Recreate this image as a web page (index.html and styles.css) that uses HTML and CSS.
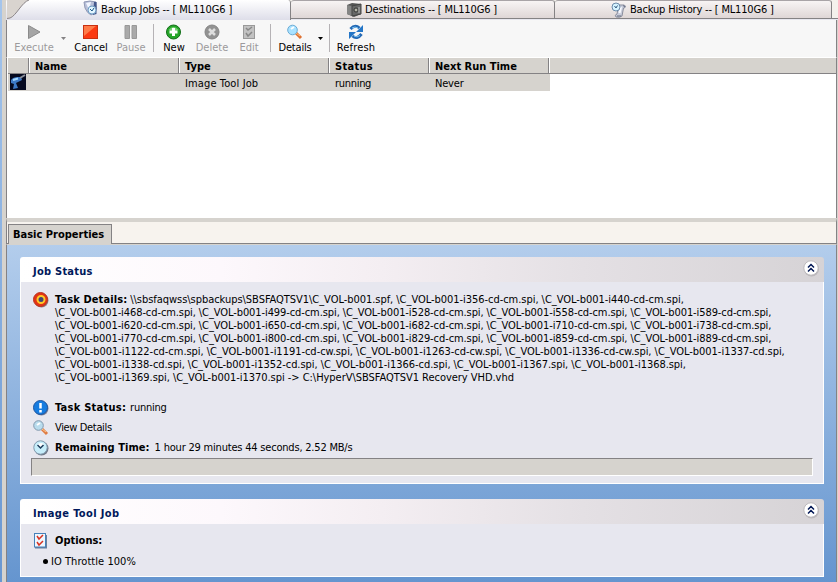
FILE: index.html
```
<!DOCTYPE html>
<html lang="en">
  <head>
    <meta charset="UTF-8" />
    <title>Backup Jobs</title>
    <link rel="stylesheet" href="styles.css">
  </head>
  <body>
    <div class="window">
      <!-- tabs -->
      <div class="tabs">
        <div class="tab active">
          <svg class="slant" width="22" height="19" viewBox="0 0 22 19">
            <path d="M0 0H22C15 2 9 16 3 18L0 18.5Z" fill="#d9d4cf" />
            <path d="M22 0C15 2 9 16 3 18L0 18.5" fill="none" stroke="#8b8588" />
          </svg>
          <svg class="icon tab-icon" width="16" height="16" viewBox="0 0 16 16">
            <path d="M1 2Q7 0 13 2L13.500 9Q12 14 8 15Q4 13 2 8Z" fill="#b9c1da" stroke="#8f97b4" />
            <path d="M3 3L8 2 6 10Z" fill="#f2f5ff" />
            <path d="M11 2L13.500 2 13.500 14 10 15Z" fill="#45588c" />
            <circle cx="9" cy="10" r="4" fill="#e3f6ff" stroke="#6d9cc4" />
            <path d="M7 9L9 11 11 8" fill="none" stroke="#1c5685" />
          </svg>
          <span class="t-jobs">Backup Jobs -- [ ML110G6 ]</span>
        </div>
        <div class="tab dest">
          <svg class="icon tab-icon" width="16" height="16" viewBox="0 0 16 16">
            <path d="M1 3L6 1 15 2V12L8 15 1 12Z" fill="#555" />
            <path d="M1 3L6 4V14L1 12Z" fill="#858585" />
            <path d="M6 4L15 2V12L6 14Z" fill="#686868" stroke="#444" />
            <circle cx="10" cy="8" r="2" fill="#b5b5a8" stroke="#333" />
            <path d="M13 5V11" stroke="#bbb" />
          </svg>
          <span class="t-dest">Destinations -- [ ML110G6 ]</span>
        </div>
        <div class="tab hist">
          <svg class="icon tab-icon" width="16" height="16" viewBox="0 0 16 16">
            <path d="M5 3L13 3Q16 4 13.500 6L12.500 6 11 14Q9 16 5 15Q3 13 6 12L7 7Z" fill="#c9cddc" stroke="#8a8e9e" />
            <path d="M8.500 11L10 5" stroke="#f8f9ff" stroke-width="2" />
            <path d="M6 14H10M12 3.500L14 5" stroke="#666c80" />
            <circle cx="5" cy="5" r="4" fill="#d5f3ff" stroke="#6c8baa" />
            <path d="M3.500 4L5 6 6.500 3.500" fill="none" stroke="#345a80" />
          </svg>
          <span class="t-hist">Backup History -- [ ML110G6 ]</span>
        </div>
      </div>

      <!-- toolbar -->
      <div class="toolbar">
        <div class="tool execute disabled">
          <svg class="icon" width="16" height="16" viewBox="0 0 16 16"><path d="M2.500 1.500L14 8 2.500 14.500Z" fill="#a5a5a5" stroke="#8b8b8b" /></svg>
          <span>Execute</span>
        </div>
        <i class="arrow gray"></i>
        <div class="tool cancel">
          <svg class="icon" width="16" height="16" viewBox="0 0 16 16"><rect x="0.500" y="1.500" width="14" height="13" fill="#fb3a12" stroke="#c83011" /><path d="M1 2H13L1 12Z" fill="#ff7b48" /></svg>
          <span>Cancel</span>
        </div>
        <div class="tool pause disabled">
          <svg class="icon" width="16" height="16" viewBox="0 0 16 16"><path d="M2 1.500H6.500V14.500H2ZM9 1.500H13.500V14.500H9Z" fill="#aaa" stroke="#999" /></svg>
          <span>Pause</span>
        </div>
        <i class="sep"></i>
        <div class="tool new">
          <svg class="icon" width="16" height="16" viewBox="0 0 16 16"><circle cx="7.500" cy="8" r="7" fill="#26a629" stroke="#126e19" /><path d="M2.500 6Q7.500 0 12.500 6Q7.500 8 2.500 6" fill="#76d274" /><path d="M7.500 4V12M3.500 8H11.500" stroke="#fff" stroke-width="3" /></svg>
          <span>New</span>
        </div>
        <div class="tool delete disabled">
          <svg class="icon" width="16" height="16" viewBox="0 0 16 16"><circle cx="8" cy="8" r="7" fill="#929292" stroke="#848484" /><path d="M5 5L11 11M11 5L5 11" stroke="#ddd" stroke-width="2.500" /></svg>
          <span>Delete</span>
        </div>
        <div class="tool edit disabled">
          <svg class="icon" width="16" height="16" viewBox="0 0 16 16"><rect x="2.500" y="1.500" width="11" height="13" fill="#c2c2c2" stroke="#999" /><path d="M5 4L7 6 11 3M5 9L7 12 11 8" fill="none" stroke="#888" stroke-width="1.500" /></svg>
          <span>Edit</span>
        </div>
        <i class="sep sep-view"></i>
        <div class="tool details">
          <svg class="icon" width="16" height="16" viewBox="0 0 16 16"><path d="M9 9L14 14" stroke="#df7131" stroke-width="3" /><path d="M9 9L13 12" stroke="#ffc17b" /><circle cx="5.500" cy="6" r="4.800" fill="#a9e2ff" stroke="#6cabd5" /><path d="M4 5L7 3" stroke="#fff" stroke-width="2" /></svg>
          <span>Details</span>
        </div>
        <i class="arrow"></i>
        <i class="sep sep-refresh"></i>
        <div class="tool refresh">
          <svg class="icon" width="16" height="16" viewBox="0 0 16 16"><path d="M2.500 5Q7 0 11.500 4M13.500 10Q9 16 4.500 12" fill="none" stroke="#2369b5" stroke-width="3" /><path d="M15 1V8H8ZM1 15V8H8Z" fill="#2476c7" /><path d="M4 4Q7 2 10 4M12 11.500Q9 14 6 12" fill="none" stroke="#7fc5f3" /></svg>
          <span>Refresh</span>
        </div>
      </div>

      <!-- job list -->
      <div class="list">
        <div class="list-row list-head">
          <div></div>
          <div>Name</div>
          <div>Type</div>
          <div><span class="h-status">Status</span></div>
          <div>Next Run Time</div>
        </div>
        <div class="list-row job">
          <div>
            <svg class="icon job-icon" width="16" height="16" viewBox="0 0 16 16">
              <rect width="16" height="16" fill="#05091f" />
              <path d="M1 6Q3 3 8 3L11 3 12 6 8 8 6 9 8 14 3 15 4 10 1 9Z" fill="#3c78c5" />
              <path d="M3 6L8 4.500" stroke="#a4d9ff" stroke-width="2" />
              <path d="M10 4L15 1" stroke="#8b909c" stroke-width="2" />
            </svg>
          </div>
          <div></div>
          <div><span class="c-type">Image Tool Job</span></div>
          <div><span class="c-status">running</span></div>
          <div><span class="c-next">Never</span></div>
        </div>
      </div>

      <!-- properties -->
      <div class="prop-tabs">
        <div class="prop-tab"><span>Basic Properties</span></div>
      </div>
      <div class="props">
        <div class="panel status-panel">
          <div class="panel-head">
            <span class="p-status">Job Status</span>
            <svg class="icon" width="17" height="17" viewBox="0 0 17 17"><circle cx="8.500" cy="9" r="7.500" fill="#bbb8bb" /><circle cx="8" cy="8" r="7.200" fill="#fff" stroke="#bdbabd" /><path d="M5 7.500L8 4.500 11 7.500M5 11.500L8 8.500 11 11.500" fill="none" stroke="#001654" stroke-width="1.500" /></svg>
          </div>
          <div class="panel-body">
            <div class="item task">
              <svg class="icon" width="16" height="16" viewBox="0 0 16 16"><circle cx="8.500" cy="8.500" r="7" fill="#8e8288" /><circle cx="7.500" cy="7.500" r="7" fill="#e33314" stroke="#b83420" /><circle cx="8" cy="7.500" r="3.500" fill="#414573" stroke="#ffc928" stroke-width="2" /></svg>
              <div class="files">
                <div><b class="l-task">Task Details:</b><span class="f1">\\sbsfaqwss\spbackups\SBSFAQTSV1\C_VOL-b001.spf, \C_VOL-b001-i356-cd-cm.spi, \C_VOL-b001-i440-cd-cm.spi,</span></div>
                <div class="f2">\C_VOL-b001-i468-cd-cm.spi, \C_VOL-b001-i499-cd-cm.spi, \C_VOL-b001-i528-cd-cm.spi, \C_VOL-b001-i558-cd-cm.spi, \C_VOL-b001-i589-cd-cm.spi,</div>
                <div class="f2">\C_VOL-b001-i620-cd-cm.spi, \C_VOL-b001-i650-cd-cm.spi, \C_VOL-b001-i682-cd-cm.spi, \C_VOL-b001-i710-cd-cm.spi, \C_VOL-b001-i738-cd-cm.spi,</div>
                <div class="f2">\C_VOL-b001-i770-cd-cm.spi, \C_VOL-b001-i800-cd-cm.spi, \C_VOL-b001-i829-cd-cm.spi, \C_VOL-b001-i859-cd-cm.spi, \C_VOL-b001-i889-cd-cm.spi,</div>
                <div class="f5">\C_VOL-b001-i1122-cd-cm.spi, \C_VOL-b001-i1191-cd-cw.spi, \C_VOL-b001-i1263-cd-cw.spi, \C_VOL-b001-i1336-cd-cw.spi, \C_VOL-b001-i1337-cd.spi,</div>
                <div class="f6">\C_VOL-b001-i1338-cd.spi, \C_VOL-b001-i1352-cd.spi, \C_VOL-b001-i1366-cd.spi, \C_VOL-b001-i1367.spi, \C_VOL-b001-i1368.spi,</div>
                <div class="f7">\C_VOL-b001-i1369.spi, \C_VOL-b001-i1370.spi -&gt; C:\HyperV\SBSFAQTSV1 Recovery VHD.vhd</div>
              </div>
            </div>
            <div class="item">
              <svg class="icon" width="16" height="16" viewBox="0 0 16 16"><circle cx="8.500" cy="8.500" r="7" fill="#7b8299" /><circle cx="7.500" cy="7.500" r="7" fill="#167ce0" stroke="#2056a0" /><path d="M7.500 3V8.500M7.500 10V12.500" stroke="#fff" stroke-width="2.500" /></svg>
              <b class="l-stat">Task Status:</b><span class="v-stat">running</span>
            </div>
            <div class="item">
              <svg class="icon" width="16" height="16" viewBox="0 0 16 16"><path d="M9 9L14 14" stroke="#df7b42" stroke-width="3" /><path d="M9 9L13 12" stroke="#ffc98a" /><circle cx="5.500" cy="5.500" r="4.800" fill="#b9dced" stroke="#8298ad" /><path d="M4 5L7 3" stroke="#fff" stroke-width="2" /></svg>
              <span class="v-view">View Details</span>
            </div>
            <div class="item">
              <svg class="icon" width="16" height="16" viewBox="0 0 16 16"><circle cx="8.500" cy="8.500" r="7" fill="#6f7887" /><circle cx="7.500" cy="7.500" r="6.700" fill="#c6edfa" stroke="#819aae" /><path d="M4 6Q6 1 11 4L8 8Z" fill="#fff" /><path d="M4.500 5L7.500 8 10.500 5" fill="none" stroke="#1c3c5c" stroke-width="1.500" /></svg>
              <b class="l-rem">Remaining Time:</b><span class="v-rem">1 hour 29 minutes 44 seconds, 2.52 MB/s</span>
            </div>
            <div class="progress"></div>
          </div>
        </div>

        <div class="panel options-panel">
          <div class="panel-head">
            <span class="p-image">Image Tool Job</span>
            <svg class="icon" width="17" height="17" viewBox="0 0 17 17"><circle cx="8.500" cy="9" r="7.500" fill="#bbb8bb" /><circle cx="8" cy="8" r="7.200" fill="#fff" stroke="#bdbabd" /><path d="M5 7.500L8 4.500 11 7.500M5 11.500L8 8.500 11 11.500" fill="none" stroke="#001654" stroke-width="1.500" /></svg>
          </div>
          <div class="panel-body">
            <div class="item">
              <svg class="icon" width="16" height="16" viewBox="0 0 16 16"><path d="M2 2H14V15.500H2Z" fill="#6a7f9b" /><rect x="1.500" y="0.500" width="11" height="13.500" fill="#eef7ff" stroke="#4681b9" /><path d="M4 3L6 6 10 2M4 9L6 12 10 8" fill="none" stroke="#d83220" stroke-width="1.500" /></svg>
              <b class="l-opt">Options:</b>
            </div>
            <div class="option"><i class="bullet"></i><span class="v-opt">IO Throttle 100%</span></div>
          </div>
        </div>
      </div>
    </div>
  </body>
</html>
```
FILE: styles.css
```
* {
  box-sizing: border-box;
}

body {
  margin: 0;
  width: 838px;
  height: 582px;
  overflow: hidden;
  font-family: "DejaVu Sans Condensed", "DejaVu Sans", sans-serif;
  font-size: 11px;
  line-height: 13px;
  color: #000;
  white-space: nowrap;
  background: linear-gradient(#a5c5ec, #6997d1);
}

.icon {
  display: block;
  flex: none;
}

.window {
  display: flex;
  flex-direction: column;
  height: 582px;
  margin-left: 2px;
  padding-left: 4px;
  background: #d6d3ce;
}

.window > div {
  border-left: 1px solid #848284;
  border-right: 1px solid #848284;
  margin-right: 1px;
  padding-left: 1px;
  flex: none;
}

/* tabs */
.window > .tabs {
  display: flex;
  height: 20px;
  margin-right: 0;
  padding-left: 0;
  border: 0;
  background: linear-gradient(#f4f1ec 18px, #848284 18px, #848284 19px, #e7e7ef 19px);
}

.tab {
  display: flex;
  height: 19px;
  padding-top: 1px;
  border: 1px solid #848284;
  border-left: 0;
  border-top-color: #a9a4a7;
  border-radius: 3px 3px 0 0;
  background: linear-gradient(#f8f4f4, #ded6d6);
}

.tab span {
  padding: 1px 0 0 2px;
}

.tab.active {
  width: 285px;
  height: 20px;
  padding-top: 0;
  border: 0;
  border-right: 1px solid #848284;
  background: linear-gradient(#fff, #dedee9);
}

.slant {
  margin-left: 1px;
  margin-right: 54px;
}

.tab.dest {
  width: 264px;
  padding-left: 55px;
}

.tab.hist {
  width: 277px;
  padding-left: 56px;
}

.tab.active span {
  padding-top: 3px;
}

.tab.dest span,
.tab.hist span {
  padding-left: 3px;
}

/* toolbar */
.window > .toolbar {
  display: flex;
  height: 38px;
  padding-top: 4px;
  background: #f7f7f7;
  border-bottom: 1px solid #fff;
}

.tool {
  display: flex;
  flex-direction: column;
  align-items: center;
}

.tool span {
  padding-top: 1px;
}

.disabled {
  color: #9c9a9c;
}

.execute { width: 52px; }
.cancel { width: 42px; margin-left: 1px; }
.pause { width: 38px; }
.new { width: 38px; }
.delete { width: 38px; }
.edit { width: 36px; }
.details { width: 46px; letter-spacing: -0.2px; }
.refresh { width: 46px; margin-left: 2px; letter-spacing: 0.2px; }

.arrow {
  width: 5px;
  height: 3px;
  margin: 13px 0 0;
  background: #000;
  clip-path: polygon(0 0, 100% 0, 50% 100%);
}

.arrow.gray {
  margin-left: 1px;
  margin-right: 3px;
  background: #848284;
}

.sep {
  width: 1px;
  height: 28px;
  margin: 0 1px 0 3px;
  background: #b5b2b5;
}

.sep-refresh {
  margin-left: 6px;
}

/* job list */
.window > .list {
  height: 160px;
  background: #fff;
}

.list-row {
  display: grid;
  grid-template-columns: 21px 150px 150px 100px 120px;
}

.list-row > div {
  padding: 3px 0 0 6px;
}

.list-head {
  height: 16px;
  font-weight: bold;
  background: #d6d3ce;
  border-bottom: 1px solid #848284;
}

.list-head > div {
  border-right: 1px solid #848284;
  box-shadow: 1px 0 #fff;
  padding-top: 2px;
}

.job {
  width: 542px;
  height: 17px;
  background: #d6d3ce;
}

.list-row .job-icon {
  margin: -3px 0 0 -4px;
}

/* properties */
.window > .prop-tabs {
  height: 26px;
  padding-top: 2px;
  background: #f7f3ee;
  border-top: 4px solid #d6d3ce;
  border-bottom: 1px solid #848284;
}

.prop-tab {
  width: 104px;
  height: 20px;
  padding: 3px 0 0 4px;
  font-weight: bold;
  background: #d6d3ce;
  border: 1px solid #848284;
  border-bottom: 0;
}

.window > .props {
  height: 338px;
  padding: 12px 11px 0 13px;
  border-top: 1px solid #d6d3ce;
  background: linear-gradient(#b3cdec, #6595cf);
}

.panel {
  width: 804px;
}

.panel-head {
  display: flex;
  justify-content: space-between;
  height: 25px;
  padding: 3px 4px 0 13px;
  color: #00185a;
  font-weight: bold;
  border-radius: 3px 3px 0 0;
  background: linear-gradient(90deg, #fff, #fdf8fc 25%, #f4eef2 45%, #e4e0e4 70%, #d6d3d6);
}

.panel-head span {
  padding-top: 5px;
}

.panel-body {
  background: #e7e7ef;
  border: 1px solid #fff;
  border-top: 0;
}

.status-panel .panel-body {
  height: 202px;
  padding: 10px 11px 0 10px;
}

.options-panel {
  margin-top: 15px;
}

.options-panel .panel-body {
  height: 53px;
  padding: 9px 11px 0 12px;
}

.item {
  display: flex;
  height: 20px;
}

.status-panel .item {
  padding-left: 2px;
}

.item > .icon {
  margin-right: 6px;
}

.item > b,
.item > span {
  padding-top: 1px;
}

.item.task {
  height: 108px;
}

.files {
  padding-top: 1px;
}

.progress {
  width: 782px;
  height: 18px;
  margin-top: -2px;
  background: #d6d3ce;
  border: 1px solid #fff;
  border-top-color: #848284;
  border-left-color: #848284;
}

.option {
  display: flex;
  align-items: center;
  height: 16px;
  padding-left: 10px;
}

.bullet {
  width: 5px;
  height: 5px;
  margin-right: 3px;
  border-radius: 50%;
  background: #000;
}

/* text widths */
.t-jobs { letter-spacing: -0.11px; }
.t-dest { letter-spacing: -0.16px; }
.t-hist { letter-spacing: -0.18px; }
.h-status { letter-spacing: 0.3px; }
.c-type { letter-spacing: 0.12px; }
.c-status { letter-spacing: -0.3px; }
.c-next { letter-spacing: -0.2px; }
.p-status { letter-spacing: 0.25px; }
.p-image { letter-spacing: 0.38px; }
.l-task { margin-right: 3px; letter-spacing: 0.1px; }
.l-stat { margin-right: 4px; letter-spacing: 0.25px; }
.l-rem { margin-right: 5px; letter-spacing: 0.05px; }
.f1 { letter-spacing: -0.04px; }
.f2 { letter-spacing: -0.09px; }
.f5 { letter-spacing: -0.03px; }
.f6 { letter-spacing: -0.045px; }
.f7 { letter-spacing: -0.035px; }
.v-stat { letter-spacing: -0.25px; }
.v-view { letter-spacing: -0.35px; }
.v-rem { letter-spacing: -0.2px; }
.v-opt { letter-spacing: 0.05px; }
```
